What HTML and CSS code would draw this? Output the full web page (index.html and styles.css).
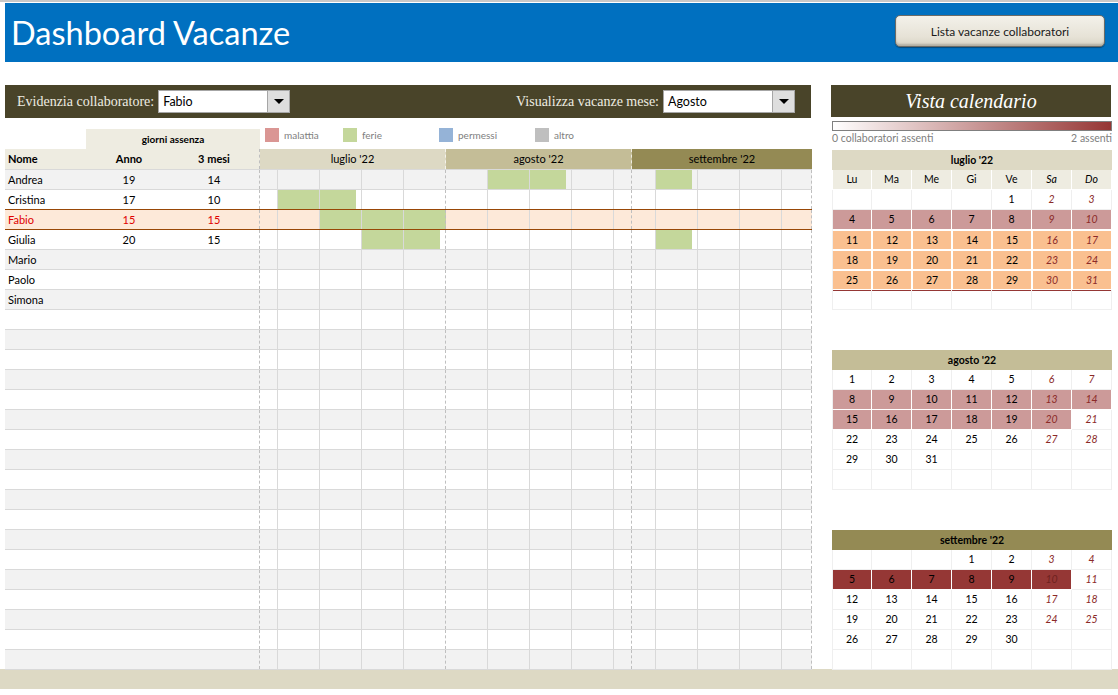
FILE: index.html
```html
<!DOCTYPE html>
<html lang="it">
<head>
<meta charset="utf-8">
<title>Dashboard Vacanze</title>
<link rel="stylesheet" href="styles.css">
</head>
<body>
<div class="topline"></div>
<header class="banner">
  <h1>Dashboard Vacanze</h1>
  <div class="btn">Lista vacanze collaboratori</div>
</header>

<div class="main">
  <section class="left">
    <div class="fbar">
      <span class="flabel">Evidenzia collaboratore:</span>
      <div class="dd"><span>Fabio</span><b><i></i></b></div>
      <div class="spacer"></div>
      <span class="flabel">Visualizza vacanze mese:</span>
      <div class="dd"><span>Agosto</span><b><i></i></b></div>
    </div>

    <div class="lrow">
      <div class="lsp"></div>
      <div class="ga">giorni assenza</div>
      <div class="legend">
        <div class="li"><span class="sw ma"></span>malattia</div>
        <div class="li"><span class="sw fe"></span>ferie</div>
        <div class="li"><span class="sw pe"></span>permessi</div>
        <div class="li"><span class="sw al"></span>altro</div>
      </div>
    </div>

    <div class="hrow">
      <div class="hleft"><div class="nm">Nome</div><div class="n">Anno</div><div class="n m3">3 mesi</div></div>
      <div class="mh jul">luglio '22</div>
      <div class="mh aug">agosto '22</div>
      <div class="mh sep">settembre '22</div>
    </div>

    <div class="rows">
      <div class="row g"><div class="nm">Andrea</div><div class="n">19</div><div class="n m3">14</div><div class="days"><div class="bars"><span class="fe" style="grid-column:39 / span 13"></span><span class="fe" style="grid-column:67 / span 6"></span></div><div class="wk"><span class="w3"></span><span></span><span></span><span></span><span class="me"></span><span></span><span></span><span></span><span></span><span class="w3 me"></span><span class="w4"></span><span></span><span></span><span></span><span class="w5 me"></span></div></div></div>
      <div class="row"><div class="nm">Cristina</div><div class="n">17</div><div class="n m3">10</div><div class="days"><div class="bars"><span class="fe" style="grid-column:4 / span 13"></span></div><div class="wk"><span class="w3"></span><span></span><span></span><span></span><span class="me"></span><span></span><span></span><span></span><span></span><span class="w3 me"></span><span class="w4"></span><span></span><span></span><span></span><span class="w5 me"></span></div></div></div>
      <div class="row sel"><div class="nm">Fabio</div><div class="n">15</div><div class="n m3">15</div><div class="days"><div class="bars"><span class="fe" style="grid-column:11 / span 21"></span></div><div class="wk"><span class="w3"></span><span></span><span></span><span></span><span class="me"></span><span></span><span></span><span></span><span></span><span class="w3 me"></span><span class="w4"></span><span></span><span></span><span></span><span class="w5 me"></span></div></div></div>
      <div class="row"><div class="nm">Giulia</div><div class="n">20</div><div class="n m3">15</div><div class="days"><div class="bars"><span class="fe" style="grid-column:18 / span 13"></span><span class="fe" style="grid-column:67 / span 6"></span></div><div class="wk"><span class="w3"></span><span></span><span></span><span></span><span class="me"></span><span></span><span></span><span></span><span></span><span class="w3 me"></span><span class="w4"></span><span></span><span></span><span></span><span class="w5 me"></span></div></div></div>
      <div class="row g"><div class="nm">Mario</div><div class="n"></div><div class="n m3"></div><div class="days"><div class="wk"><span class="w3"></span><span></span><span></span><span></span><span class="me"></span><span></span><span></span><span></span><span></span><span class="w3 me"></span><span class="w4"></span><span></span><span></span><span></span><span class="w5 me"></span></div></div></div>
      <div class="row"><div class="nm">Paolo</div><div class="n"></div><div class="n m3"></div><div class="days"><div class="wk"><span class="w3"></span><span></span><span></span><span></span><span class="me"></span><span></span><span></span><span></span><span></span><span class="w3 me"></span><span class="w4"></span><span></span><span></span><span></span><span class="w5 me"></span></div></div></div>
      <div class="row g"><div class="nm">Simona</div><div class="n"></div><div class="n m3"></div><div class="days"><div class="wk"><span class="w3"></span><span></span><span></span><span></span><span class="me"></span><span></span><span></span><span></span><span></span><span class="w3 me"></span><span class="w4"></span><span></span><span></span><span></span><span class="w5 me"></span></div></div></div>
      <div class="row"><div class="nm"></div><div class="n"></div><div class="n m3"></div><div class="days"><div class="wk"><span class="w3"></span><span></span><span></span><span></span><span class="me"></span><span></span><span></span><span></span><span></span><span class="w3 me"></span><span class="w4"></span><span></span><span></span><span></span><span class="w5 me"></span></div></div></div>
      <div class="row g"><div class="nm"></div><div class="n"></div><div class="n m3"></div><div class="days"><div class="wk"><span class="w3"></span><span></span><span></span><span></span><span class="me"></span><span></span><span></span><span></span><span></span><span class="w3 me"></span><span class="w4"></span><span></span><span></span><span></span><span class="w5 me"></span></div></div></div>
      <div class="row"><div class="nm"></div><div class="n"></div><div class="n m3"></div><div class="days"><div class="wk"><span class="w3"></span><span></span><span></span><span></span><span class="me"></span><span></span><span></span><span></span><span></span><span class="w3 me"></span><span class="w4"></span><span></span><span></span><span></span><span class="w5 me"></span></div></div></div>
      <div class="row g"><div class="nm"></div><div class="n"></div><div class="n m3"></div><div class="days"><div class="wk"><span class="w3"></span><span></span><span></span><span></span><span class="me"></span><span></span><span></span><span></span><span></span><span class="w3 me"></span><span class="w4"></span><span></span><span></span><span></span><span class="w5 me"></span></div></div></div>
      <div class="row"><div class="nm"></div><div class="n"></div><div class="n m3"></div><div class="days"><div class="wk"><span class="w3"></span><span></span><span></span><span></span><span class="me"></span><span></span><span></span><span></span><span></span><span class="w3 me"></span><span class="w4"></span><span></span><span></span><span></span><span class="w5 me"></span></div></div></div>
      <div class="row g"><div class="nm"></div><div class="n"></div><div class="n m3"></div><div class="days"><div class="wk"><span class="w3"></span><span></span><span></span><span></span><span class="me"></span><span></span><span></span><span></span><span></span><span class="w3 me"></span><span class="w4"></span><span></span><span></span><span></span><span class="w5 me"></span></div></div></div>
      <div class="row"><div class="nm"></div><div class="n"></div><div class="n m3"></div><div class="days"><div class="wk"><span class="w3"></span><span></span><span></span><span></span><span class="me"></span><span></span><span></span><span></span><span></span><span class="w3 me"></span><span class="w4"></span><span></span><span></span><span></span><span class="w5 me"></span></div></div></div>
      <div class="row g"><div class="nm"></div><div class="n"></div><div class="n m3"></div><div class="days"><div class="wk"><span class="w3"></span><span></span><span></span><span></span><span class="me"></span><span></span><span></span><span></span><span></span><span class="w3 me"></span><span class="w4"></span><span></span><span></span><span></span><span class="w5 me"></span></div></div></div>
      <div class="row"><div class="nm"></div><div class="n"></div><div class="n m3"></div><div class="days"><div class="wk"><span class="w3"></span><span></span><span></span><span></span><span class="me"></span><span></span><span></span><span></span><span></span><span class="w3 me"></span><span class="w4"></span><span></span><span></span><span></span><span class="w5 me"></span></div></div></div>
      <div class="row g"><div class="nm"></div><div class="n"></div><div class="n m3"></div><div class="days"><div class="wk"><span class="w3"></span><span></span><span></span><span></span><span class="me"></span><span></span><span></span><span></span><span></span><span class="w3 me"></span><span class="w4"></span><span></span><span></span><span></span><span class="w5 me"></span></div></div></div>
      <div class="row"><div class="nm"></div><div class="n"></div><div class="n m3"></div><div class="days"><div class="wk"><span class="w3"></span><span></span><span></span><span></span><span class="me"></span><span></span><span></span><span></span><span></span><span class="w3 me"></span><span class="w4"></span><span></span><span></span><span></span><span class="w5 me"></span></div></div></div>
      <div class="row g"><div class="nm"></div><div class="n"></div><div class="n m3"></div><div class="days"><div class="wk"><span class="w3"></span><span></span><span></span><span></span><span class="me"></span><span></span><span></span><span></span><span></span><span class="w3 me"></span><span class="w4"></span><span></span><span></span><span></span><span class="w5 me"></span></div></div></div>
      <div class="row"><div class="nm"></div><div class="n"></div><div class="n m3"></div><div class="days"><div class="wk"><span class="w3"></span><span></span><span></span><span></span><span class="me"></span><span></span><span></span><span></span><span></span><span class="w3 me"></span><span class="w4"></span><span></span><span></span><span></span><span class="w5 me"></span></div></div></div>
      <div class="row g"><div class="nm"></div><div class="n"></div><div class="n m3"></div><div class="days"><div class="wk"><span class="w3"></span><span></span><span></span><span></span><span class="me"></span><span></span><span></span><span></span><span></span><span class="w3 me"></span><span class="w4"></span><span></span><span></span><span></span><span class="w5 me"></span></div></div></div>
      <div class="row"><div class="nm"></div><div class="n"></div><div class="n m3"></div><div class="days"><div class="wk"><span class="w3"></span><span></span><span></span><span></span><span class="me"></span><span></span><span></span><span></span><span></span><span class="w3 me"></span><span class="w4"></span><span></span><span></span><span></span><span class="w5 me"></span></div></div></div>
      <div class="row g"><div class="nm"></div><div class="n"></div><div class="n m3"></div><div class="days"><div class="wk"><span class="w3"></span><span></span><span></span><span></span><span class="me"></span><span></span><span></span><span></span><span></span><span class="w3 me"></span><span class="w4"></span><span></span><span></span><span></span><span class="w5 me"></span></div></div></div>
      <div class="row"><div class="nm"></div><div class="n"></div><div class="n m3"></div><div class="days"><div class="wk"><span class="w3"></span><span></span><span></span><span></span><span class="me"></span><span></span><span></span><span></span><span></span><span class="w3 me"></span><span class="w4"></span><span></span><span></span><span></span><span class="w5 me"></span></div></div></div>
      <div class="row g"><div class="nm"></div><div class="n"></div><div class="n m3"></div><div class="days"><div class="wk"><span class="w3"></span><span></span><span></span><span></span><span class="me"></span><span></span><span></span><span></span><span></span><span class="w3 me"></span><span class="w4"></span><span></span><span></span><span></span><span class="w5 me"></span></div></div></div>
    </div>
  </section>

  <aside class="right">
    <div class="vtitle">Vista calendario</div>
    <div class="scale"></div>
    <div class="scale-lbl"><span>0 collaboratori assenti</span><span>2 assenti</span></div>

    <div class="cal first">
      <div class="ch jul">luglio '22</div>
      <div class="cg names"><span>Lu</span><span>Ma</span><span>Me</span><span>Gi</span><span>Ve</span><span class="we">Sa</span><span class="we">Do</span></div>
      <div class="cg"><span></span><span></span><span></span><span></span><span>1</span><span class="we">2</span><span class="we">3</span></div>
      <div class="cg"><span class="p1">4</span><span class="p1">5</span><span class="p1">6</span><span class="p1">7</span><span class="p1">8</span><span class="p1 we">9</span><span class="p1 we">10</span></div>
      <div class="cg"><span class="hl">11</span><span class="hl">12</span><span class="hl">13</span><span class="hl">14</span><span class="hl">15</span><span class="hl we">16</span><span class="hl we">17</span></div>
      <div class="cg"><span class="hl">18</span><span class="hl">19</span><span class="hl">20</span><span class="hl">21</span><span class="hl">22</span><span class="hl we">23</span><span class="hl we">24</span></div>
      <div class="cg last-hl"><span class="hl">25</span><span class="hl">26</span><span class="hl">27</span><span class="hl">28</span><span class="hl">29</span><span class="hl we">30</span><span class="hl we">31</span></div>
      <div class="cg"><span></span><span></span><span></span><span></span><span></span><span></span><span></span></div>
    </div>

    <div class="cal">
      <div class="ch aug">agosto '22</div>
      <div class="cg"><span>1</span><span>2</span><span>3</span><span>4</span><span>5</span><span class="we">6</span><span class="we">7</span></div>
      <div class="cg"><span class="p1">8</span><span class="p1">9</span><span class="p1">10</span><span class="p1">11</span><span class="p1">12</span><span class="p1 we">13</span><span class="p1 we">14</span></div>
      <div class="cg"><span class="p1">15</span><span class="p1">16</span><span class="p1">17</span><span class="p1">18</span><span class="p1">19</span><span class="p1 we">20</span><span class="we">21</span></div>
      <div class="cg"><span>22</span><span>23</span><span>24</span><span>25</span><span>26</span><span class="we">27</span><span class="we">28</span></div>
      <div class="cg"><span>29</span><span>30</span><span>31</span><span></span><span></span><span></span><span></span></div>
      <div class="cg"><span></span><span></span><span></span><span></span><span></span><span></span><span></span></div>
    </div>

    <div class="cal">
      <div class="ch sep">settembre '22</div>
      <div class="cg"><span></span><span></span><span></span><span>1</span><span>2</span><span class="we">3</span><span class="we">4</span></div>
      <div class="cg"><span class="p2">5</span><span class="p2">6</span><span class="p2">7</span><span class="p2">8</span><span class="p2">9</span><span class="p2 we">10</span><span class="we">11</span></div>
      <div class="cg"><span>12</span><span>13</span><span>14</span><span>15</span><span>16</span><span class="we">17</span><span class="we">18</span></div>
      <div class="cg"><span>19</span><span>20</span><span>21</span><span>22</span><span>23</span><span class="we">24</span><span class="we">25</span></div>
      <div class="cg"><span>26</span><span>27</span><span>28</span><span>29</span><span>30</span><span></span><span></span></div>
      <div class="cg"><span></span><span></span><span></span><span></span><span></span><span></span><span></span></div>
    </div>
  </aside>
</div>
<footer class="foot"></footer>
</body>
</html>
```

FILE: styles.css
```css
* { box-sizing: border-box; }

body {
  margin: 0;
  width: 1118px;
  height: 695px;
  overflow: hidden;
  background: #fff;
  color: #000;
  font-family: Lato, "Open Sans", sans-serif;
  font-size: 11px;
}

.topline { height: 2px; background: #c8c8c8; }

.banner {
  margin: 1px 0 0 5px;
  height: 59px;
  background: #0070c0;
  display: flex;
  align-items: center;
  justify-content: space-between;
  padding: 0 13px 0 6px;
}
.banner h1 {
  margin: 0;
  font-weight: 400;
  font-size: 32.5px;
  color: #fff;
}
.btn {
  width: 210px;
  height: 32px;
  margin-top: -3px;
  border-radius: 5px;
  border: 1px solid #6b6b66;
  background: linear-gradient(#f3f1ea, #e6e2d6 70%, #d8d3c4);
  box-shadow: inset 0 -2px 2px rgba(0,0,0,0.18), 0 1px 1px rgba(0,0,0,0.35);
  font-size: 12px;
  color: #1a1a1a;
  display: flex;
  align-items: center;
  justify-content: center;
}

.main {
  display: flex;
  gap: 19px;
  margin: 23px 0 0 5px;
  height: 584px;
}

/* left panel */
.left { width: 807px; }

.fbar {
  width: 806px;
  height: 33px;
  background: #494429;
  display: flex;
  align-items: center;
  padding: 0 16px 0 12px;
}
.flabel {
  font-family: "Liberation Serif", serif;
  font-size: 14px;
  color: #eeece1;
  margin-right: 4px;
}
.spacer { flex: 1; }
.dd {
  width: 132px;
  height: 23px;
  background: #fff;
  border: 1px solid #a6a6a6;
  display: flex;
  font-size: 12.5px;
}
.dd span { flex: 1; padding: 3px 4px; line-height: 15px; }
.dd b {
  width: 22px;
  background: #dedede;
  border-left: 1px solid #a6a6a6;
  display: flex;
  align-items: center;
  justify-content: center;
}
.dd i {
  width: 0; height: 0;
  border-left: 5px solid transparent;
  border-right: 5px solid transparent;
  border-top: 5px solid #000;
}

.lrow { display: flex; height: 31px; }
.lsp { width: 81px; }
.ga {
  width: 174px;
  height: 20px;
  margin-top: 11px;
  background: #eeece1;
  font-weight: 700;
  font-size: 10px;
  text-align: center;
  line-height: 20px;
}
.legend { display: flex; padding: 10px 0 0 5px; }
.li {
  display: flex;
  align-items: flex-start;
  gap: 5px;
  width: 96px;
  height: 14px;
  color: #808080;
  font-size: 10px;
  line-height: 14px;
}
.li:first-child { width: 78px; }
.sw { width: 14px; height: 14px; flex: none; }
.ma { background: #da9694; }
.fe { background: #c4d79b; }
.pe { background: #95b3d7; }
.al { background: #bfbfbf; }

.hrow {
  display: flex;
  height: 21px;
  border-bottom: 1px solid #d9d9d9;
  font-size: 11px;
}
.hleft {
  display: flex;
  width: 255px;
  background: #eeece1;
  font-weight: 700;
  line-height: 20px;
}
.hleft .m3 { border-right: 1px dashed #eeece1; }
.mh { text-align: center; line-height: 20px; }
.mh.jul { width: 186px; background: #ddd9c4; border-right: 1px dashed #f4f2ea; }
.mh.aug { width: 186px; background: #c4bd97; border-right: 1px dashed #eeece1; }
.mh.sep { width: 180px; background: #948a54; }

.row {
  display: flex;
  height: 20px;
  border-bottom: 1px solid #d9d9d9;
  line-height: 19px;
}
.row.g { background: #f2f2f2; }
.row.sel {
  background: #fde9d9;
  color: #e00000;
  border-bottom-color: #984807;
  box-shadow: 0 -1px 0 #984807;
}
.nm { width: 81px; padding-left: 3px; }
.n { width: 86px; text-align: center; }
.n.m3 { width: 88px; border-right: 1px dashed #bfbfbf; padding-right: 3px; }

.days { display: grid; width: 552px; }
.days > * { grid-area: 1 / 1; }
.bars { display: grid; grid-template-columns: repeat(92, 6px); }
.bars span { grid-row: 1; }
.wk { display: flex; }
.wk span { flex: none; width: 42px; border-right: 1px solid #d9d9d9; }
.wk .w3 { width: 18px; }
.wk .w4 { width: 24px; }
.wk .w5 { width: 30px; }
.wk .me { border-right: 1px dashed #bfbfbf; }

/* right panel */
.right { width: 281px; }
.vtitle {
  width: 280px;
  height: 32px;
  background: #494429;
  color: #fff;
  font-family: "Liberation Serif", serif;
  font-style: italic;
  font-size: 20px;
  display: flex;
  align-items: center;
  justify-content: center;
}
.scale {
  margin: 4px 0 0 1px;
  width: 280px;
  height: 10px;
  border: 1px solid #7f7f7f;
  background: linear-gradient(to right, #fff, #963634);
}
.scale-lbl {
  display: flex;
  justify-content: space-between;
  margin-left: 1px;
  width: 280px;
  height: 14px;
  line-height: 14px;
  color: #808080;
  font-size: 10.5px;
}

.cal { margin: 40px 0 0 1px; width: 280px; }
.cal.first { margin-top: 5px; }
.ch {
  height: 20px;
  line-height: 20px;
  text-align: center;
  font-weight: 700;
  font-size: 10.5px;
}
.ch.jul { background: #ddd9c4; }
.ch.aug { background: #c4bd97; }
.ch.sep { background: #948a54; }

.cg { display: grid; grid-template-columns: repeat(7, 40px); }
.cg span {
  height: 20px;
  line-height: 19px;
  text-align: center;
  font-size: 10.5px;
  border-right: 1px solid #efefef;
  border-bottom: 1px solid #efefef;
}
.cg span:first-child { border-left: 1px solid #efefef; }
.cg.names span { background: #eeece1; border-color: #fff; }
.cg .we { font-style: italic; color: #8b2a28; }
.cg.names .we { color: #000; }
.cg .p1 { background: #cc9a99; border-color: #fff; }
.cg .p2 { background: #953735; border-color: #fff; }
.cg .p2.we { color: #6e2220; }
.cg .hl { background: #fac090; border: 1px solid #fff; }
.cg.last-hl span { box-shadow: 0 1px 0 #953735; }

.foot {
  height: 20px;
  background: #ddd9c4;
}
```
